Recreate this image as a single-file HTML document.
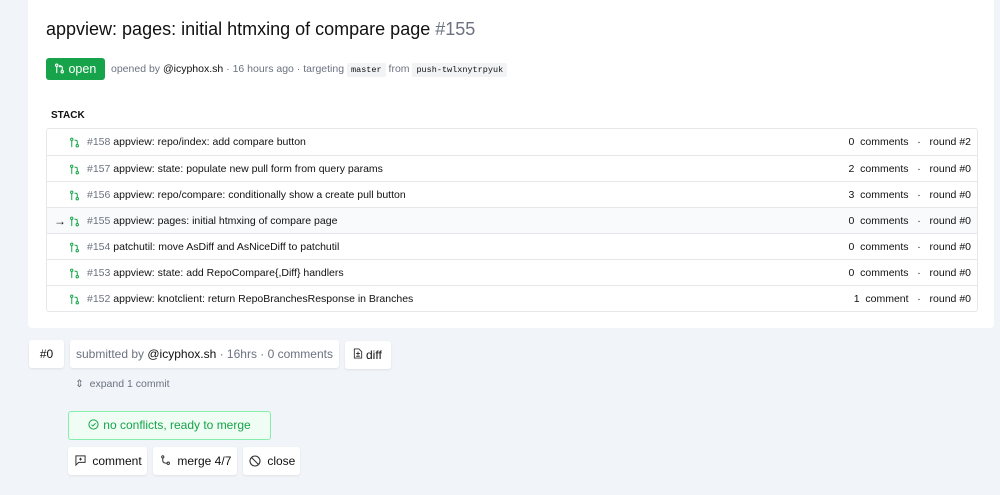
<!DOCTYPE html>
<html><head><meta charset="utf-8"><style>
*{box-sizing:border-box;margin:0;padding:0}
body{width:1000px;height:495px;overflow:hidden;background:#f1f4f8;font-family:"Liberation Sans",sans-serif;color:#111;position:relative}
.card{position:absolute;left:28px;top:0;width:966px;height:328px;background:#fff;border-radius:0 0 4px 4px}
h1{position:absolute;left:46px;top:19px;font-size:18px;font-weight:400;color:#111}
h1 span{color:#6b7280}
.open{position:absolute;left:46px;top:58px;width:59px;height:22px;background:#16a34a;color:#fff;border-radius:3px;font-size:12.5px;line-height:22px;padding-left:8px}
.meta{position:absolute;left:111px;top:58px;font-size:10.5px;line-height:22px;color:#6b7280}
.meta b{font-weight:400;color:#111}
code{font-family:"Liberation Mono",monospace;font-size:8.5px;background:#f1f3f5;padding:2px 4px;color:#111;border-radius:2px}
.stk{position:absolute;left:51px;top:110px;font-size:10px;font-weight:700}
.list{position:absolute;left:46px;top:128px;width:932px;border:1px solid #e5e7eb;border-radius:3px}
.row{height:26px;border-top:1px solid #e5e7eb;font-size:10.5px;line-height:26px;position:relative;padding-left:40px}
.row:first-child{border-top:none}
.row.cur{background:#f9fafb}
.row .n{color:#6b7280}
.row .r{position:absolute;right:6px;top:0}
.ic{position:absolute;left:22px;top:8px}
.arr{position:absolute;left:7px;top:0;font-size:12px}
.box{position:absolute;background:#fff;border-radius:3px;box-shadow:0 1px 2px rgba(0,0,0,.08);font-size:12px;line-height:28px}
.g{color:#6b7280}
svg.b{margin-right:3px}
</style></head><body>
<div class="card"></div>
<h1>appview: pages: initial htmxing of compare page <span>#155</span></h1>
<div class="open"><svg width="11" height="11" viewBox="0 0 12 12" style="vertical-align:-1px" fill="none" stroke="#fff" stroke-width="1.2"><circle cx="3" cy="2.5" r="1.3"/><line x1="3" y1="4" x2="3" y2="11"/><circle cx="9" cy="9.5" r="1.3"/><path d="M9 8V5Q9 3.5 7.5 3.5H6M7 2.3L5.8 3.5 7 4.7"/></svg> open</div>
<div class="meta">opened by <b>@icyphox.sh</b> · 16 hours ago · targeting <code>master</code> from <code>push-twlxnytrpyuk</code></div>
<div class="stk">STACK</div>
<div class="list">
<div class="row"><svg class="ic" width="11" height="11" viewBox="0 0 12 12" fill="none" stroke="#16a34a" stroke-width="1.1"><circle cx="3" cy="2.5" r="1.3"/><line x1="3" y1="4" x2="3" y2="11"/><circle cx="9" cy="9.5" r="1.3"/><path d="M9 8V5Q9 3.5 7.5 3.5H6"/></svg><span class="n">#158</span> appview: repo/index: add compare button<span class="r">0 &nbsp;comments &nbsp; · &nbsp; round #2</span></div>
<div class="row"><svg class="ic" width="11" height="11" viewBox="0 0 12 12" fill="none" stroke="#16a34a" stroke-width="1.1"><circle cx="3" cy="2.5" r="1.3"/><line x1="3" y1="4" x2="3" y2="11"/><circle cx="9" cy="9.5" r="1.3"/><path d="M9 8V5Q9 3.5 7.5 3.5H6"/></svg><span class="n">#157</span> appview: state: populate new pull form from query params<span class="r">2 &nbsp;comments &nbsp; · &nbsp; round #0</span></div>
<div class="row"><svg class="ic" width="11" height="11" viewBox="0 0 12 12" fill="none" stroke="#16a34a" stroke-width="1.1"><circle cx="3" cy="2.5" r="1.3"/><line x1="3" y1="4" x2="3" y2="11"/><circle cx="9" cy="9.5" r="1.3"/><path d="M9 8V5Q9 3.5 7.5 3.5H6"/></svg><span class="n">#156</span> appview: repo/compare: conditionally show a create pull button<span class="r">3 &nbsp;comments &nbsp; · &nbsp; round #0</span></div>
<div class="row cur"><span class="arr">→</span><svg class="ic" width="11" height="11" viewBox="0 0 12 12" fill="none" stroke="#16a34a" stroke-width="1.1"><circle cx="3" cy="2.5" r="1.3"/><line x1="3" y1="4" x2="3" y2="11"/><circle cx="9" cy="9.5" r="1.3"/><path d="M9 8V5Q9 3.5 7.5 3.5H6"/></svg><span class="n">#155</span> appview: pages: initial htmxing of compare page<span class="r">0 &nbsp;comments &nbsp; · &nbsp; round #0</span></div>
<div class="row"><svg class="ic" width="11" height="11" viewBox="0 0 12 12" fill="none" stroke="#16a34a" stroke-width="1.1"><circle cx="3" cy="2.5" r="1.3"/><line x1="3" y1="4" x2="3" y2="11"/><circle cx="9" cy="9.5" r="1.3"/><path d="M9 8V5Q9 3.5 7.5 3.5H6"/></svg><span class="n">#154</span> patchutil: move AsDiff and AsNiceDiff to patchutil<span class="r">0 &nbsp;comments &nbsp; · &nbsp; round #0</span></div>
<div class="row"><svg class="ic" width="11" height="11" viewBox="0 0 12 12" fill="none" stroke="#16a34a" stroke-width="1.1"><circle cx="3" cy="2.5" r="1.3"/><line x1="3" y1="4" x2="3" y2="11"/><circle cx="9" cy="9.5" r="1.3"/><path d="M9 8V5Q9 3.5 7.5 3.5H6"/></svg><span class="n">#153</span> appview: state: add RepoCompare{,Diff} handlers<span class="r">0 &nbsp;comments &nbsp; · &nbsp; round #0</span></div>
<div class="row"><svg class="ic" width="11" height="11" viewBox="0 0 12 12" fill="none" stroke="#16a34a" stroke-width="1.1"><circle cx="3" cy="2.5" r="1.3"/><line x1="3" y1="4" x2="3" y2="11"/><circle cx="9" cy="9.5" r="1.3"/><path d="M9 8V5Q9 3.5 7.5 3.5H6"/></svg><span class="n">#152</span> appview: knotclient: return RepoBranchesResponse in Branches<span class="r">1 &nbsp;comment &nbsp; · &nbsp; round #0</span></div>
</div>
<div class="box" style="left:29px;top:340px;width:35px;text-align:center">#0</div>
<div class="box g" style="left:70px;top:340px;width:269px;padding-left:6px">submitted by <span style="color:#111">@icyphox.sh</span> · 16hrs · 0 comments</div>
<div class="box" style="left:345px;top:341px;width:46px;padding-left:8px"><svg class="b" width="10" height="11" viewBox="0 0 10 12" fill="none" stroke="#333" stroke-width="1"><path d="M1 1H6L9 4V11H1Z M3 6H7M5 4V8M3 9H7"/></svg>diff</div>
<div style="position:absolute;left:75px;top:378px;font-size:10.5px;color:#6b7280">⇕ &nbsp;expand 1 commit</div>
<div style="position:absolute;left:68px;top:411px;width:203px;height:29px;background:#f0fdf4;border:1px solid #86efac;border-radius:3px;color:#16a34a;font-size:12px;line-height:27px;text-align:center"><svg width="11" height="11" viewBox="0 0 12 12" fill="none" stroke="#16a34a" stroke-width="1.1" style="vertical-align:-1px;margin-right:4px"><circle cx="6" cy="6" r="5"/><path d="M3.8 6.2L5.3 7.6 8.3 4.6"/></svg>no conflicts, ready to merge</div>
<div class="box" style="left:68px;top:447px;width:79px;padding-left:7px"><svg class="b" width="11" height="11" viewBox="0 0 12 12" fill="none" stroke="#333" stroke-width="1.1" style="vertical-align:-1px"><path d="M1 1H11V8H4L1 11Z M6 3V6M4.5 4.5H7.5"/></svg> comment</div>
<div class="box" style="left:153px;top:447px;width:84px;padding-left:7px"><svg class="b" width="11" height="11" viewBox="0 0 12 12" fill="none" stroke="#333" stroke-width="1.1" style="vertical-align:-1px"><circle cx="3" cy="2" r="1.2"/><circle cx="9" cy="9" r="1.3"/><path d="M3 3.5V6Q3 9 7.5 9"/></svg> merge 4/7</div>
<div class="box" style="left:243px;top:447px;width:57px;padding-left:6px"><svg class="b" width="12" height="12" viewBox="0 0 12 12" fill="none" stroke="#333" stroke-width="1.1" style="vertical-align:-2px"><circle cx="6" cy="6" r="5"/><path d="M2.5 2.5L9.5 9.5"/></svg> close</div>
</body></html>
